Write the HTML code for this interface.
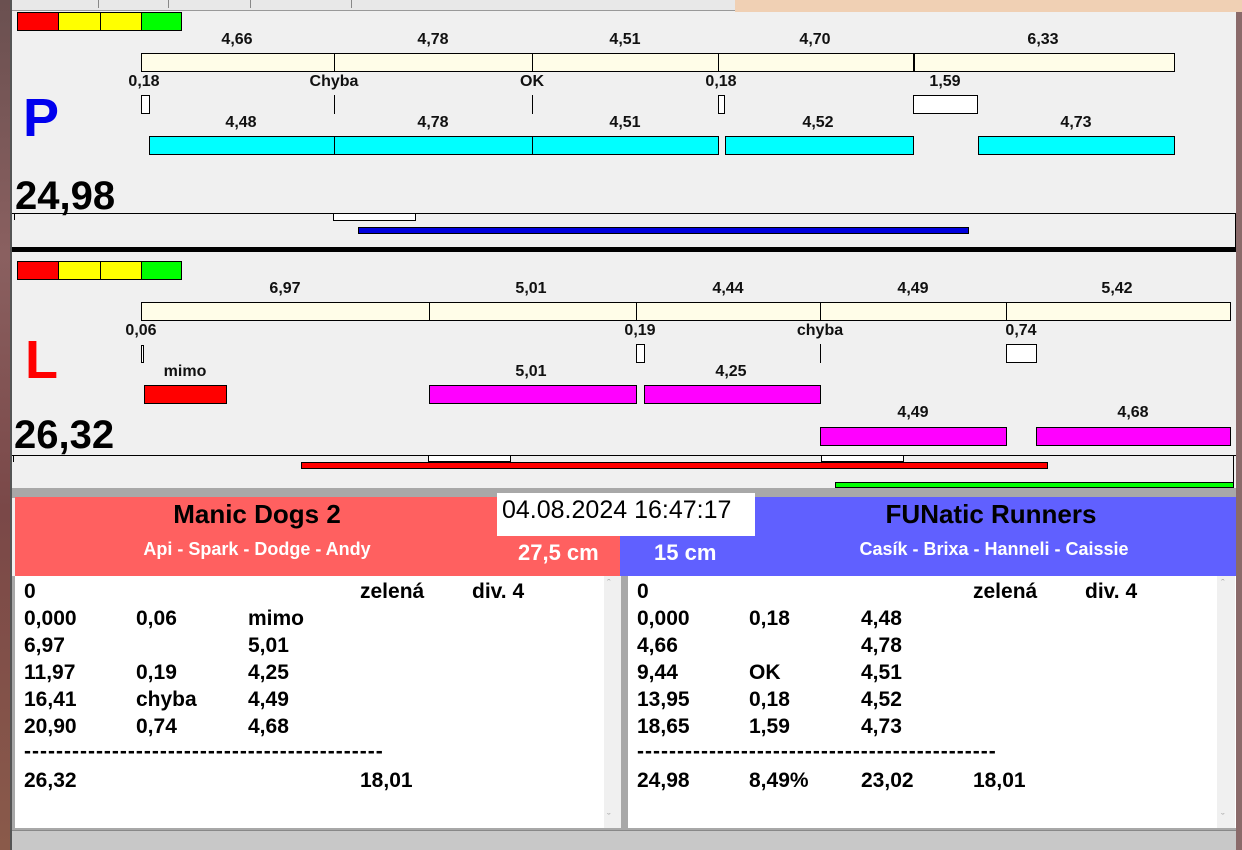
<!DOCTYPE html>
<html><head><meta charset="utf-8"><style>
*{margin:0;padding:0}
body{width:1242px;height:850px;overflow:hidden;background:#f0f0f0;position:relative;font-family:"Liberation Sans",Arial,sans-serif}
div,span{position:absolute;box-sizing:border-box}
.b{border:1px solid #000}
.pale{background:#fffde8}
.cy{background:#00ffff}
.mg{background:#ff00ff}
.w{background:#fff}
.l{font-weight:bold;font-size:16px;transform:translateX(-50%);white-space:nowrap;line-height:16px;color:#111}
.t{font-weight:bold;font-size:21px;line-height:27px;color:#000;white-space:nowrap}
.v{width:1px;background:#000}
</style></head><body>
<div style="left:0;top:0;width:11px;height:850px;background:linear-gradient(#6a5050,#8a6060 30%,#7a4848 60%,#8a5a4a)"></div>
<div style="left:10px;top:0;width:2px;height:850px;background:#555"></div>
<div style="left:12px;top:0;width:723px;height:11px;background:#e8e8e8;border-bottom:1px solid #999"></div>
<div style="left:98px;top:0;width:1px;height:8px;background:#888"></div>
<div style="left:168px;top:0;width:1px;height:8px;background:#888"></div>
<div style="left:250px;top:0;width:1px;height:8px;background:#888"></div>
<div style="left:351px;top:0;width:1px;height:8px;background:#888"></div>
<div style="left:735px;top:0;width:507px;height:12px;background:#f0d0b4"></div>
<div style="left:1236px;top:12px;width:6px;height:838px;background:#8a6a6a"></div>

<div class="b" style="left:17px;top:12px;width:42px;height:19px;background:#f00"></div>
<div class="b" style="left:58px;top:12px;width:43px;height:19px;background:#ff0"></div>
<div class="b" style="left:100px;top:12px;width:42px;height:19px;background:#ff0"></div>
<div class="b" style="left:141px;top:12px;width:41px;height:19px;background:#0f0"></div>

<span class="l" style="left:237px;top:32px">4,66</span>
<span class="l" style="left:433px;top:32px">4,78</span>
<span class="l" style="left:625px;top:32px">4,51</span>
<span class="l" style="left:815px;top:32px">4,70</span>
<span class="l" style="left:1043px;top:32px">6,33</span>
<div class="b pale" style="left:141px;top:53px;width:1034px;height:19px"></div>
<div class="v" style="left:334px;top:53px;height:19px"></div>
<div class="v" style="left:532px;top:53px;height:19px"></div>
<div class="v" style="left:718px;top:53px;height:19px"></div>
<div class="v" style="left:913px;top:53px;height:19px;width:2px"></div>

<span class="l" style="left:144px;top:74px">0,18</span>
<span class="l" style="left:334px;top:74px">Chyba</span>
<span class="l" style="left:532px;top:74px">OK</span>
<span class="l" style="left:721px;top:74px">0,18</span>
<span class="l" style="left:945px;top:74px">1,59</span>
<div class="b w" style="left:141px;top:95px;width:9px;height:19px"></div>
<div class="v" style="left:334px;top:95px;height:19px"></div>
<div class="v" style="left:532px;top:95px;height:19px"></div>
<div class="b w" style="left:718px;top:95px;width:7px;height:19px"></div>
<div class="b w" style="left:913px;top:95px;width:65px;height:19px"></div>

<span class="l" style="left:241px;top:115px">4,48</span>
<span class="l" style="left:433px;top:115px">4,78</span>
<span class="l" style="left:625px;top:115px">4,51</span>
<span class="l" style="left:818px;top:115px">4,52</span>
<span class="l" style="left:1076px;top:115px">4,73</span>
<div class="b cy" style="left:149px;top:136px;width:186px;height:19px"></div>
<div class="b cy" style="left:334px;top:136px;width:199px;height:19px"></div>
<div class="b cy" style="left:532px;top:136px;width:187px;height:19px"></div>
<div class="b cy" style="left:725px;top:136px;width:189px;height:19px"></div>
<div class="b cy" style="left:978px;top:136px;width:197px;height:19px"></div>

<span style="left:23px;top:88px;font-weight:bold;font-size:54px;line-height:60px;color:#0000ee">P</span>
<span style="left:15px;top:174px;font-weight:bold;font-size:40px;line-height:44px;color:#000">24,98</span>

<div style="left:12px;top:213px;width:1224px;height:1px;background:#000"></div>
<div style="left:1235px;top:213px;width:1px;height:35px;background:#000"></div>
<div style="left:14px;top:213px;width:1px;height:7px;background:#000"></div>
<div class="b w" style="left:333px;top:213px;width:83px;height:8px"></div>
<div class="b" style="left:358px;top:227px;width:611px;height:7px;background:#0000dd"></div>
<div style="left:12px;top:247px;width:1224px;height:5px;background:#000"></div>

<div class="b" style="left:17px;top:261px;width:42px;height:19px;background:#f00"></div>
<div class="b" style="left:58px;top:261px;width:43px;height:19px;background:#ff0"></div>
<div class="b" style="left:100px;top:261px;width:42px;height:19px;background:#ff0"></div>
<div class="b" style="left:141px;top:261px;width:41px;height:19px;background:#0f0"></div>

<span class="l" style="left:285px;top:281px">6,97</span>
<span class="l" style="left:531px;top:281px">5,01</span>
<span class="l" style="left:728px;top:281px">4,44</span>
<span class="l" style="left:913px;top:281px">4,49</span>
<span class="l" style="left:1117px;top:281px">5,42</span>
<div class="b pale" style="left:141px;top:302px;width:1090px;height:19px"></div>
<div class="v" style="left:429px;top:302px;height:19px"></div>
<div class="v" style="left:636px;top:302px;height:19px"></div>
<div class="v" style="left:820px;top:302px;height:19px"></div>
<div class="v" style="left:1006px;top:302px;height:19px"></div>

<span class="l" style="left:141px;top:323px">0,06</span>
<span class="l" style="left:640px;top:323px">0,19</span>
<span class="l" style="left:820px;top:323px">chyba</span>
<span class="l" style="left:1021px;top:323px">0,74</span>
<div class="b w" style="left:141px;top:345px;width:3px;height:18px"></div>
<div class="b w" style="left:636px;top:344px;width:9px;height:19px"></div>
<div class="v" style="left:820px;top:344px;height:19px"></div>
<div class="b w" style="left:1006px;top:344px;width:31px;height:19px"></div>

<span class="l" style="left:185px;top:364px">mimo</span>
<span class="l" style="left:531px;top:364px">5,01</span>
<span class="l" style="left:731px;top:364px">4,25</span>
<div class="b" style="left:144px;top:385px;width:83px;height:19px;background:#f00"></div>
<div class="b mg" style="left:429px;top:385px;width:208px;height:19px"></div>
<div class="b mg" style="left:644px;top:385px;width:177px;height:19px"></div>

<span class="l" style="left:913px;top:405px">4,49</span>
<span class="l" style="left:1133px;top:405px">4,68</span>
<div class="b mg" style="left:820px;top:427px;width:187px;height:19px"></div>
<div class="b mg" style="left:1036px;top:427px;width:195px;height:19px"></div>

<span style="left:25px;top:330px;font-weight:bold;font-size:54px;line-height:60px;color:#ff0000">L</span>
<span style="left:14px;top:413px;font-weight:bold;font-size:40px;line-height:44px;color:#000">26,32</span>

<div style="left:12px;top:455px;width:1224px;height:1px;background:#000"></div>
<div style="left:1233px;top:455px;width:1px;height:33px;background:#000"></div>
<div style="left:13px;top:455px;width:1px;height:7px;background:#000"></div>
<div class="b w" style="left:428px;top:455px;width:83px;height:7px"></div>
<div class="b w" style="left:821px;top:455px;width:83px;height:7px"></div>
<div class="b" style="left:301px;top:462px;width:747px;height:7px;background:#f00"></div>
<div class="b" style="left:835px;top:482px;width:399px;height:6px;background:#0f0"></div>

<div style="left:12px;top:488px;width:1224px;height:10px;background:#a8a8a8"></div>

<div style="left:15px;top:497px;width:610px;height:79px;background:#ff6060"></div>
<div style="left:620px;top:497px;width:616px;height:79px;background:#6060ff"></div>
<div style="left:620px;top:497px;width:135px;height:39px;background:#ff6060"></div>
<div style="left:497px;top:493px;width:258px;height:43px;background:#fff"></div>
<span style="left:502px;top:494px;font-size:25px;line-height:32px;color:#000">04.08.2024 16:47:17</span>
<span style="left:257px;top:498px;transform:translateX(-50%);font-weight:bold;font-size:26px;line-height:32px;color:#000;white-space:nowrap">Manic Dogs 2</span>
<span style="left:257px;top:538px;transform:translateX(-50%);font-weight:bold;font-size:18px;line-height:22px;color:#fff;white-space:nowrap">Api - Spark - Dodge - Andy</span>
<span style="left:518px;top:539px;font-weight:bold;font-size:22px;line-height:28px;color:#fff;white-space:nowrap">27,5 cm</span>
<span style="left:991px;top:498px;transform:translateX(-50%);font-weight:bold;font-size:26px;line-height:32px;color:#000;white-space:nowrap">FUNatic Runners</span>
<span style="left:994px;top:538px;transform:translateX(-50%);font-weight:bold;font-size:18px;line-height:22px;color:#fff;white-space:nowrap">Casík - Brixa - Hanneli - Caissie</span>
<span style="left:654px;top:539px;font-weight:bold;font-size:22px;line-height:28px;color:#fff;white-space:nowrap">15 cm</span>

<div style="left:12px;top:576px;width:1224px;height:254px;background:#a8a8a8"></div>
<div style="left:15px;top:576px;width:606px;height:252px;background:#fff"></div>
<div style="left:604px;top:576px;width:17px;height:252px;background:#f0f0f0"></div>
<span style="left:607px;top:578px;font-size:11px;color:#aaa">&#710;</span>
<span style="left:607px;top:812px;font-size:11px;color:#aaa">&#711;</span>
<div style="left:628px;top:576px;width:608px;height:252px;background:#fff"></div>
<div style="left:1217px;top:576px;width:18px;height:252px;background:#f0f0f0"></div>
<span style="left:1221px;top:578px;font-size:11px;color:#aaa">&#710;</span>
<span style="left:1221px;top:812px;font-size:11px;color:#aaa">&#711;</span>

<div style="left:24px;top:578px">
<span class="t" style="left:0;top:0">0</span><span class="t" style="left:336px;top:0">zelená</span><span class="t" style="left:448px;top:0">div. 4</span>
<span class="t" style="left:0;top:27px">0,000</span><span class="t" style="left:112px;top:27px">0,06</span><span class="t" style="left:224px;top:27px">mimo</span>
<span class="t" style="left:0;top:54px">6,97</span><span class="t" style="left:224px;top:54px">5,01</span>
<span class="t" style="left:0;top:81px">11,97</span><span class="t" style="left:112px;top:81px">0,19</span><span class="t" style="left:224px;top:81px">4,25</span>
<span class="t" style="left:0;top:108px">16,41</span><span class="t" style="left:112px;top:108px">chyba</span><span class="t" style="left:224px;top:108px">4,49</span>
<span class="t" style="left:0;top:135px">20,90</span><span class="t" style="left:112px;top:135px">0,74</span><span class="t" style="left:224px;top:135px">4,68</span>
<span class="t" style="left:0;top:160px;letter-spacing:1px">---------------------------------------------</span>
<span class="t" style="left:0;top:189px">26,32</span><span class="t" style="left:336px;top:189px">18,01</span>
</div>
<div style="left:637px;top:578px">
<span class="t" style="left:0;top:0">0</span><span class="t" style="left:336px;top:0">zelená</span><span class="t" style="left:448px;top:0">div. 4</span>
<span class="t" style="left:0;top:27px">0,000</span><span class="t" style="left:112px;top:27px">0,18</span><span class="t" style="left:224px;top:27px">4,48</span>
<span class="t" style="left:0;top:54px">4,66</span><span class="t" style="left:224px;top:54px">4,78</span>
<span class="t" style="left:0;top:81px">9,44</span><span class="t" style="left:112px;top:81px">OK</span><span class="t" style="left:224px;top:81px">4,51</span>
<span class="t" style="left:0;top:108px">13,95</span><span class="t" style="left:112px;top:108px">0,18</span><span class="t" style="left:224px;top:108px">4,52</span>
<span class="t" style="left:0;top:135px">18,65</span><span class="t" style="left:112px;top:135px">1,59</span><span class="t" style="left:224px;top:135px">4,73</span>
<span class="t" style="left:0;top:160px;letter-spacing:1px">---------------------------------------------</span>
<span class="t" style="left:0;top:189px">24,98</span><span class="t" style="left:112px;top:189px">8,49%</span><span class="t" style="left:224px;top:189px">23,02</span><span class="t" style="left:336px;top:189px">18,01</span>
</div>

<div style="left:12px;top:830px;width:1224px;height:20px;background:#c8c8c8;border-top:1px solid #888"></div>
</body></html>
